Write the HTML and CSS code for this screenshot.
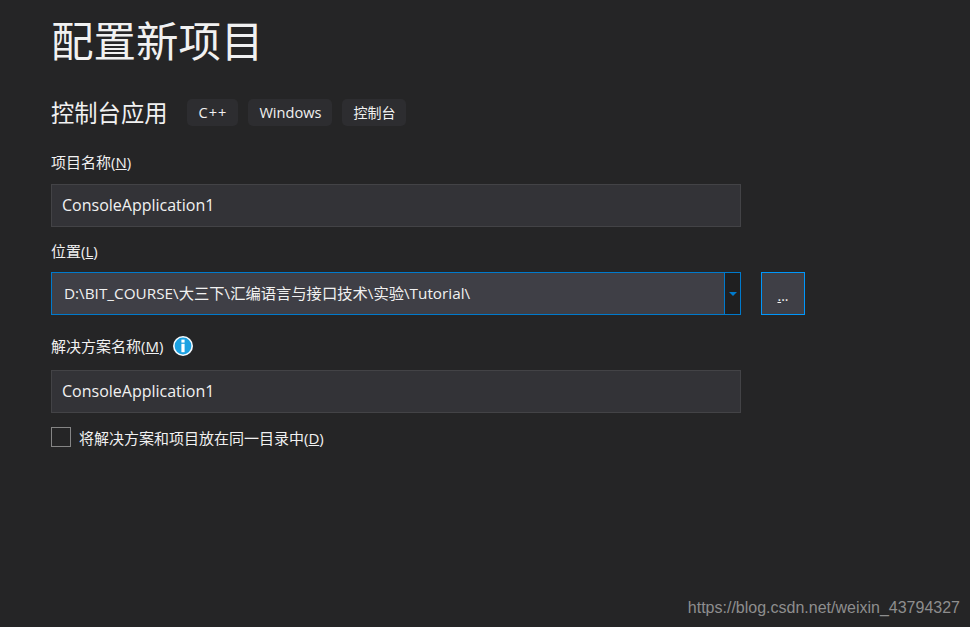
FILE: index.html
```html
<!DOCTYPE html>
<html lang="zh-CN">
<head>
  <meta charset="UTF-8" />
  <title>配置新项目</title>
  <link rel="stylesheet" href="styles.css">
</head>
<body>

  <main class="page">
    <h1>配置新项目</h1>

    <div class="template-row">
      <h2>控制台应用</h2>
      <div class="tags">
        <span class="tag tag-lang">C++</span>
        <span class="tag">Windows</span>
        <span class="tag tag-cjk">控制台</span>
      </div>
    </div>

    <div class="field-label first">项目名称(<u>N</u>)</div>
    <div class="text-box">ConsoleApplication1</div>

    <div class="field-label">位置(<u>L</u>)</div>
    <div class="location-row">
      <div class="combo">
        <div class="combo-text">D:\BIT_COURSE\大三下\汇编语言与接口技术\实验\Tutorial\</div>
        <div class="combo-arrow"><span class="arrow"></span></div>
      </div>
      <div class="browse"><span class="browse-dots"><u>.</u>..</span></div>
    </div>

    <div class="field-label solution">
      <span>解决方案名称(<u>M</u>)</span>
      <svg class="info-icon" width="20" height="20" viewBox="0 0 20 20">
        <circle cx="10" cy="10" r="10" fill="#f5fbff"/>
        <circle cx="10" cy="10" r="8.4" fill="#1ba1e2"/>
        <rect x="8.4" y="3.6" width="3.2" height="3" fill="#fff"/>
        <rect x="8.4" y="7.8" width="3.2" height="8.4" fill="#fff"/>
      </svg>
    </div>
    <div class="text-box">ConsoleApplication1</div>

    <div class="check-row">
      <span class="check-box"></span>
      <span>将解决方案和项目放在同一目录中(<u>D</u>)</span>
    </div>
  </main>

  <div class="watermark">https://blog.csdn.net/weixin_43794327</div>

</body>
</html>
```

FILE: styles.css
```css
html, body {
  height: 100%;
}

body {
  margin: 0;
  background-color: #252526;
  color: #f1f1f1;
  font-family: 'Open Sans', 'Noto Sans CJK SC', sans-serif;
  position: relative;
  overflow: hidden;
}

.page {
  width: 754px;
  padding: 13px 0 0 51px;
}

h1 {
  margin: 0;
  height: 52px;
  font-size: 42.5px;
  line-height: 52px;
  font-weight: 400;
  font-family: 'Noto Sans CJK SC', sans-serif;
}

.template-row {
  display: flex;
  align-items: center;
  margin-top: 34px;
  height: 27px;
}

h2 {
  margin: 0;
  padding-bottom: 1px;
  font-size: 23.3px;
  line-height: 27px;
  font-weight: 400;
  font-family: 'Noto Sans CJK SC', sans-serif;
}

.tags {
  display: flex;
  gap: 10px;
  margin-left: 20px;
}

.tag {
  height: 27px;
  line-height: 27px;
  padding: 0 11px;
  background-color: #2d2d30;
  border-radius: 5px;
  font-size: 14.6px;
}

.tag-lang {
  letter-spacing: 1px;
}

.tag-cjk {
  font-size: 14px;
}

.field-label {
  height: 20px;
  line-height: 20px;
  font-size: 15px;
  margin-top: 14px;
  margin-bottom: 11px;
}

.field-label.first {
  margin-top: 26px;
  margin-bottom: 12px;
}

.field-label.solution {
  display: flex;
  align-items: center;
  gap: 10px;
  margin-top: 21px;
  margin-bottom: 14px;
}

.text-box {
  box-sizing: border-box;
  width: 690px;
  height: 43px;
  line-height: 41px;
  padding-left: 10px;
  background-color: #333337;
  border: 1px solid #434346;
  font-size: 16px;
}

.location-row {
  display: flex;
  gap: 20px;
}

.combo {
  box-sizing: border-box;
  display: flex;
  width: 690px;
  height: 43px;
  border: 1px solid #007acc;
}

.combo-text {
  flex: 1;
  line-height: 41px;
  padding-left: 12px;
  background-color: #3f3f46;
  font-size: 15.3px;
}

.combo-arrow {
  display: flex;
  align-items: center;
  justify-content: center;
  width: 15px;
  background-color: #1f1f20;
  border-left: 1px solid #007acc;
}

.arrow {
  width: 0;
  height: 0;
  border-left: 4px solid transparent;
  border-right: 4px solid transparent;
  border-top: 4px solid #007acc;
}

.browse {
  box-sizing: border-box;
  display: flex;
  align-items: flex-end;
  justify-content: center;
  width: 44px;
  height: 43px;
  background-color: #3f3f46;
  border: 1px solid #0097fb;
  font-size: 14px;
  line-height: 20px;
  padding-bottom: 8px;
}

.check-row {
  display: flex;
  align-items: center;
  gap: 8px;
  margin-top: 14px;
  font-size: 15px;
  height: 20px;
}

.check-box {
  box-sizing: border-box;
  width: 20px;
  height: 20px;
  border: 1px solid #858585;
}

.watermark {
  position: absolute;
  right: 10px;
  bottom: 10px;
  font-family: 'Liberation Sans', sans-serif;
  font-size: 16px;
  line-height: 18px;
  color: #8e8e8e;
}
```
